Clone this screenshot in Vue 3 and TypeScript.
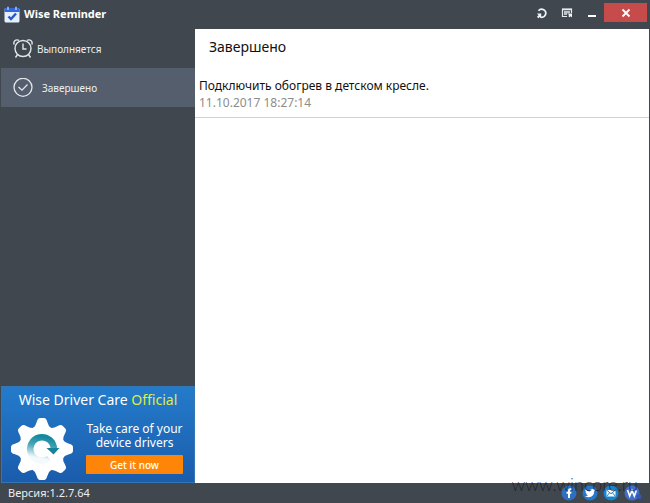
<script setup lang="ts">
import { ref } from 'vue'

type Tab = 'active' | 'done'

interface Reminder {
  id: number
  text: string
  date: string
}

const current = ref<Tab>('done')
const version = '1.2.7.64'
const reminders: Reminder[] = [
  { id: 1, text: 'Подключить обогрев в детском кресле.', date: '11.10.2017 18:27:14' },
]
const teeth = [0, 45, 90, 135, 180, 225, 270, 315]
</script>

<template>
  <div class="window">
    <header class="titlebar">
      <svg class="logo" width="16" height="17" viewBox="0 0 16 17" aria-hidden="true">
        <rect x="0.5" y="2" width="15" height="14.5" rx="1.5" fill="#e4efff" />
        <path d="M0.5 6V3.5Q0.5 2 2 2H14Q15.500 2 15.500 3.500V6Z" fill="#3268dc" />
        <path d="M4 .8V4M12 .8V4" stroke="#a9c6ff" stroke-width="1.5" />
        <path d="M4.500 10.500L7 13L12 7.500" fill="none" stroke="#2458d0" stroke-width="2.400" />
      </svg>
      <h1 class="title">Wise Reminder</h1>
      <div class="controls">
        <button class="tool" type="button" aria-label="Refresh">
          <svg width="12" height="12" viewBox="0 0 12 12">
            <path d="M2.500 3.800A4 4 0 1 1 4.500 10" fill="none" stroke="#f2f4f6" stroke-width="1.700" />
            <path d="M1 6.500H5.200V11.200L3.900 9.900L2.300 11.200L1 9.800L2.500 8.300Z" fill="#f2f4f6" />
          </svg>
        </button>
        <button class="tool" type="button" aria-label="Menu">
          <svg width="12" height="12" viewBox="0 0 12 12">
            <path d="M6 9.500H1.500V2H10.500V6" fill="none" stroke="#e8ebee" stroke-width="1.200" />
            <path d="M1 2.500H11M3 5H9M3 7H6" stroke="#e8ebee" stroke-width="1.300" />
            <path d="M6 6.500H11V10.500L9.700 9.200L8.500 10.300L7.300 9L8.300 8Z" fill="#f4f5f7" />
          </svg>
        </button>
        <button class="tool" type="button" aria-label="Minimize">
          <svg width="12" height="12" viewBox="0 0 12 12">
            <path d="M2 9H10" stroke="#fff" stroke-width="2" />
          </svg>
        </button>
        <button class="close" type="button" aria-label="Close">
          <svg width="10" height="10" viewBox="0 0 10 10">
            <path d="M1.500 1.500L8.500 8.500M8.500 1.500L1.500 8.500" stroke="#fff" stroke-width="1.800" />
          </svg>
        </button>
      </div>
    </header>

    <div class="body">
      <aside class="sidebar">
        <nav class="nav">
          <button
            class="nav-item near"
            :class="{ selected: current === 'active' }"
            type="button"
            @click="current = 'active'"
          >
            <svg width="20" height="20" viewBox="0 0 20 20" fill="none" stroke="#e3e6ea" stroke-width="1.400">
              <circle cx="10" cy="9.500" r="8" />
              <path d="M10 4.500V10H13.500M4.500 15.500L2.500 18.500M15.500 15.500L17.500 18.500" />
              <path d="M1.200 5.500C0 2.500 2.500 0 6 1.300M18.800 5.500C20 2.500 17.500 0 14 1.300" />
            </svg>
            <span>Выполняется</span>
          </button>
          <button
            class="nav-item"
            :class="{ selected: current === 'done' }"
            type="button"
            @click="current = 'done'"
          >
            <svg width="20" height="20" viewBox="0 0 20 20" fill="none" stroke="#e3e6ea" stroke-width="1.300">
              <circle cx="10" cy="9.300" r="9" />
              <path d="M5.500 9L9 12.200L14.500 6.500" />
            </svg>
            <span>Завершено</span>
          </button>
        </nav>

        <section class="promo">
          <h2 class="promo-title">Wise Driver Care <em>Official</em></h2>
          <div class="promo-body">
            <svg class="gear" width="64" height="64" viewBox="-32 -32 64 64" aria-hidden="true">
              <defs>
                <linearGradient id="swirl" x1="0.600" y1="0" x2="0.400" y2="1">
                  <stop offset="0" stop-color="#158a9f" />
                  <stop offset="0.400" stop-color="#4ba6b7" />
                  <stop offset="0.900" stop-color="#f4fafb" />
                </linearGradient>
              </defs>
              <circle r="23" fill="#fff" />
              <path
                v-for="angle in teeth"
                :key="angle"
                d="M-9 -21Q-6.500 -22.500 -5.300 -27Q-4.300 -31 -2 -31H2Q4.300 -31 5.300 -27Q6.500 -22.500 9 -21Z"
                fill="#fff"
                :transform="`rotate(${angle})`"
              />
              <path
                d="M11.800 0A11.800 11.800 0 1 0 7 9.500"
                fill="none"
                stroke="url(#swirl)"
                stroke-width="6.500"
              />
              <path d="M4.500 -1H17.500L11.500 5.500Z" fill="#178298" />
            </svg>
            <div class="promo-copy">
              <p>Take care of your<br />device drivers</p>
              <button class="cta" type="button">Get it now</button>
            </div>
          </div>
        </section>
      </aside>

      <main class="content">
        <h2 class="heading">Завершено</h2>
        <ul class="list">
          <li v-for="item in reminders" :key="item.id" class="entry">
            <span>{{ item.text }}</span>
            <time>{{ item.date }}</time>
          </li>
        </ul>
      </main>
    </div>

    <footer class="statusbar">
      <span>Версия:{{ version }}</span>
      <div class="social">
        <a href="#facebook" aria-label="Facebook">
          <svg width="16" height="16" viewBox="0 0 16 16">
            <circle cx="8" cy="8" r="7.500" fill="#2f70bd" />
            <path d="M7 13V8.700H5.500V6.700H7V5.500Q7 3.200 9.300 3.200H10.500V5.100H9.700Q9 5.100 9 5.800V6.700H10.500L10.200 8.700H9V13Z" fill="#fff" />
          </svg>
        </a>
        <a href="#twitter" aria-label="Twitter">
          <svg width="16" height="16" viewBox="0 0 16 16">
            <circle cx="8" cy="8" r="7.500" fill="#2676c9" />
            <path d="M3.300 4.300Q5.300 6.500 8 6.500Q7.800 4 10 3.800Q11 3.800 11.500 4.500L13 4L12.200 5.300L13.200 5.200L12.200 6.300Q12 12 6.800 12.200Q4.600 12.200 3 11.200Q5 11.200 6 10.300Q4.500 10 4.100 8.800H5Q3.500 8.200 3.400 6.800L4.200 7Q2.800 5.800 3.300 4.300Z" fill="#fff" />
          </svg>
        </a>
        <a href="#mail" aria-label="E-mail">
          <svg width="16" height="16" viewBox="0 0 16 16">
            <circle cx="8" cy="8" r="7.500" fill="#1784cf" />
            <rect x="3.500" y="5" width="9" height="6.500" fill="#fff" />
            <path d="M3.500 5L8 8.700L12.500 5M3.500 11.500L6.500 7.800M12.500 11.500L9.500 7.800" fill="none" stroke="#1784cf" />
          </svg>
        </a>
        <a href="#wise" aria-label="WiseCleaner">
          <svg width="18" height="16" viewBox="0 0 18 16">
            <circle cx="8" cy="8" r="7.500" fill="#416fc8" />
            <circle cx="15" cy="11.500" r="2.500" fill="#2f59b4" />
            <path d="M3.500 5L5.700 11L8 5.500L10.300 11L12.500 5" fill="none" stroke="#fff" stroke-width="1.600" />
          </svg>
        </a>
      </div>
    </footer>
    <div class="watermark">www.wincore.ru</div>
  </div>
</template>

<style>
body {
  margin: 0;
}
</style>

<style scoped>
.window {
  position: relative;
  display: flex;
  flex-direction: column;
  min-height: 100vh;
  background: #40474f;
  color: #eceef0;
  font: 11px/16px "Noto Sans", "Open Sans", sans-serif;
}
h1, h2, p, ul {
  margin: 0;
  padding: 0;
}
button {
  border: 0;
  padding: 0;
  background: none;
  color: inherit;
  font: inherit;
  cursor: pointer;
}
svg {
  display: block;
  flex: none;
}
.titlebar {
  display: flex;
  align-items: center;
  height: 29px;
  padding-left: 4px;
}
.title {
  margin-left: 4px;
  padding-bottom: 2px;
  font-size: 11px;
  font-weight: 700;
  color: #fff;
}
.controls {
  display: flex;
  align-self: flex-start;
  margin-left: auto;
  padding: 3px 3px 0 0;
}
.tool {
  display: grid;
  place-items: center;
  width: 25px;
  height: 19px;
}
.close {
  display: grid;
  place-items: center;
  width: 43px;
  height: 19px;
  background: #c84b4b;
}
.body {
  display: flex;
  flex: 1;
  padding: 0 1px;
}
.sidebar {
  display: flex;
  flex-direction: column;
  width: 194px;
}
.nav {
  display: flex;
  flex-direction: column;
  font-size: 10px;
}
.nav-item {
  display: flex;
  align-items: center;
  gap: 9px;
  height: 39px;
  padding-left: 12px;
}
.near {
  gap: 4px;
}
.selected {
  background: #545e6c;
}
.promo {
  margin-top: auto;
  height: 97px;
  box-sizing: border-box;
  border: 1px solid #3475b4;
  background: linear-gradient(#247bcb, #1b5cac);
  color: #fff;
}
.promo-title {
  padding-top: 3px;
  font-size: 14px;
  line-height: 20px;
  font-weight: 400;
  text-align: center;
}
.promo-title em {
  font-style: normal;
  color: #dfed45;
}
.promo-body {
  display: flex;
  padding-left: 8px;
}
.gear {
  margin-top: 7px;
}
.promo-copy {
  flex: 1;
  padding: 12px 11px 0 12px;
  text-align: center;
  font-size: 12px;
  line-height: 14px;
  font-weight: 400;
  white-space: nowrap;
}
.cta {
  width: 100%;
  height: 19px;
  margin-top: 5px;
  border-radius: 1px;
  background: #ff8509;
  font-size: 10px;
  font-weight: 500;
}
.content {
  flex: 1;
  background: #fff;
  color: #111;
}
.heading {
  padding: 7px 14px 0;
  font-size: 14px;
  line-height: 22px;
  font-weight: 400;
}
.list {
  padding-top: 19px;
  list-style: none;
}
.entry {
  display: flex;
  flex-direction: column;
  padding: 0 4px 6px;
  border-bottom: 1px solid #cfd2d5;
  font-size: 12px;
  line-height: 17px;
}
.entry time {
  color: #8c8c8c;
}
.statusbar {
  display: flex;
  align-items: center;
  justify-content: space-between;
  height: 20px;
  padding: 0 8px;
}
.social {
  display: flex;
  gap: 5px;
}
.watermark {
  position: absolute;
  right: 12px;
  bottom: 7px;
  font: 300 18px/24px Lato, sans-serif;
  color: rgba(20, 20, 20, 0.7);
  pointer-events: none;
}
</style>
